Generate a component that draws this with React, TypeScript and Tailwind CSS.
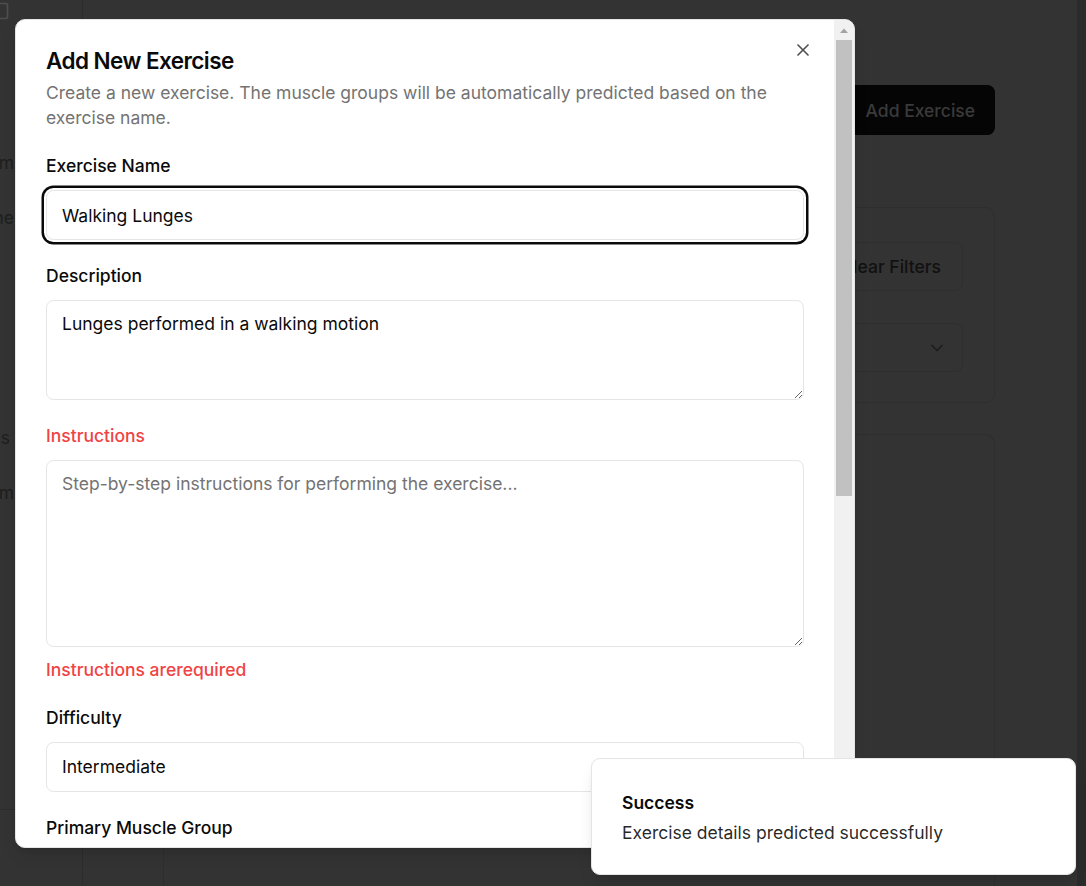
import { X, ChevronDown, Plus, PanelLeft } from "lucide-react";
import type { ReactNode } from "react";

const FieldLabel = ({ children, error }: { children: ReactNode; error?: boolean }) => (
  <label
    className={
      error
        ? "block text-[17.5px] leading-[25px] font-medium text-[#ef4444]"
        : "block text-[17.5px] leading-[25px] font-medium text-[#0a0a0a]"
    }
  >
    {children}
  </label>
);

// sidebar labels are mostly hidden under the dialog, only their tails show
const SideItem = ({ label, narrow }: { label: string; narrow?: boolean }) => (
  <div
    className={
      narrow
        ? "flex h-[25px] w-[10px] justify-end overflow-hidden whitespace-nowrap text-[17.5px] leading-[25px] text-[#1e1e1e]"
        : "flex h-[25px] w-[14px] justify-end overflow-hidden whitespace-nowrap text-[17.5px] leading-[25px] text-[#1e1e1e]"
    }
  >
    {label}
  </div>
);

const BackgroundPage = () => (
  <div className="flex h-full">
    <aside className="flex w-[83px] shrink-0 flex-col border-r border-[#2c2c2c]">
      <div className="relative h-[20px] overflow-hidden">
        <PanelLeft className="absolute -left-[10px] top-[1px] size-[20px] text-[#4e4e4e]" strokeWidth={2} />
      </div>
      <div className="mt-[129.5px] flex flex-col gap-[30px]">
        <SideItem label="Program" />
        <SideItem label="Routine" />
      </div>
      <div className="mt-[195px] flex flex-col gap-[30px]">
        <SideItem label="Exercises" narrow />
        <SideItem label="Platform" />
      </div>
      <div className="mt-auto h-[77px] border-t border-[#2c2c2c]" />
    </aside>

    <main className="flex flex-1 flex-col pt-[85px] pr-[82px] pl-[80px]">
      <div className="flex justify-end">
        <button className="flex h-[50px] items-center gap-[10px] rounded-[7.5px] bg-[#050505] px-[20px] pt-[2px] text-[17.5px] font-medium text-[#3a3a3a]">
          <Plus className="size-[20px]" />
          Add Exercise
        </button>
      </div>

      <div className="mt-[72px] flex h-[196px] flex-col rounded-[10px] border border-[#2e2e2e] px-[31px] pt-[34px]">
        <div className="flex justify-end gap-[20px]">
          <div className="h-[49px] flex-1 rounded-[7.5px] border border-[#2e2e2e]" />
          <button className="h-[49px] rounded-[7.5px] border border-[#2e2e2e] px-[21px] pt-[2px] text-[17.5px] font-medium text-[#111111]">
            Clear Filters
          </button>
        </div>
        <div className="mt-[32px] flex h-[49px] items-center justify-end rounded-[7.5px] border border-[#2e2e2e] pr-[15px]">
          <ChevronDown className="size-[20px] text-[#1d1d1d]" />
        </div>
      </div>

      <div className="mt-[31px] flex-1 rounded-t-[10px] border border-b-0 border-[#2e2e2e]" />
    </main>

    <div className="w-[9px] shrink-0 bg-[#2b2b2b]" />
  </div>
);

const Toast = () => (
  <div className="absolute left-[591px] top-[758px] flex h-[117px] w-[485px] flex-col gap-[5px] rounded-[9px] border border-[#e5e5e5] bg-white px-[30px] pt-[31px] shadow-lg">
    <div className="text-[17.5px] leading-[25px] font-semibold text-[#0a0a0a]">Success</div>
    <div className="text-[17.5px] leading-[25px] text-[#0a0a0a]/90">Exercise details predicted successfully</div>
  </div>
);

const ExerciseDialog = () => (
  <div className="absolute left-[15px] top-[19px] flex h-[829px] w-[840px] overflow-hidden rounded-[10px] border border-[#e5e5e5] bg-white shadow-lg">
    <div className="relative flex-1 overflow-hidden px-[30px] pt-[30px]">
      <button className="absolute left-[776.5px] top-[19.5px] text-[#0a0a0a] opacity-70">
        <X className="size-[20px]" />
      </button>

      <div className="flex flex-col gap-[7.5px]">
        <h2 className="text-[22.5px] leading-[22.5px] font-semibold tracking-tight text-[#0a0a0a]">Add New Exercise</h2>
        <p className="text-[17.5px] leading-[25px] text-[#737373]">
          Create a new exercise. The muscle groups will be automatically predicted based on the exercise name.
        </p>
      </div>

      <form className="mt-[22.5px] flex flex-col gap-[22.5px]">
        <div className="flex flex-col gap-[12.5px]">
          <FieldLabel>Exercise Name</FieldLabel>
          <input
            defaultValue="Walking Lunges"
            className="h-[50px] w-full rounded-[7.5px] border border-[#e5e5e5] bg-white px-[15px] text-[17.5px] text-[#0a0a0a] outline-none ring-[2.5px] ring-[#0a0a0a] ring-offset-[2px] ring-offset-white"
          />
        </div>

        <div className="flex flex-col gap-[12.5px]">
          <FieldLabel>Description</FieldLabel>
          <textarea
            defaultValue="Lunges performed in a walking motion"
            className="block h-[100px] w-full resize-y rounded-[7.5px] border border-[#e5e5e5] bg-white px-[15px] py-[10px] text-[17.5px] leading-[25px] text-[#0a0a0a] outline-none"
          />
        </div>

        <div className="flex flex-col">
          <FieldLabel error>Instructions</FieldLabel>
          <textarea
            placeholder="Step-by-step instructions for performing the exercise..."
            className="mt-[12.5px] block h-[187px] w-full resize-y rounded-[7.5px] border border-[#e5e5e5] bg-white px-[15px] py-[10px] text-[17.5px] leading-[25px] text-[#0a0a0a] outline-none placeholder:text-[#737373]"
          />
          <p className="mt-[10px] text-[17.5px] leading-[25px] font-medium text-[#ef4444]">Instructions arerequired</p>
        </div>

        <div className="flex flex-col gap-[12.5px]">
          <FieldLabel>Difficulty</FieldLabel>
          <button
            type="button"
            className="flex h-[50px] w-full items-center justify-between rounded-[7.5px] border border-[#e5e5e5] bg-white px-[15px] pt-[1px] text-left text-[17.5px] text-[#0a0a0a]"
          >
            Intermediate
            <ChevronDown className="size-[20px] opacity-50" />
          </button>
        </div>

        <div className="flex flex-col gap-[12.5px]">
          <FieldLabel>Primary Muscle Group</FieldLabel>
          <div className="h-[50px] w-full rounded-[7.5px] border border-[#e5e5e5]" />
        </div>
      </form>
    </div>

    <div className="flex w-[20px] shrink-0 flex-col items-center bg-[#f1f1f1]">
      <svg width="20" height="20" viewBox="0 0 20 20" className="shrink-0">
        <path d="M6 13 L10 8.5 L14 13 Z" fill="#a3a3a3" />
      </svg>
      <div className="h-[456px] w-[16px] bg-[#c1c1c1]" />
    </div>
  </div>
);

export default function App() {
  return (
    <div className="relative h-[886px] w-[1086px] overflow-hidden bg-[#333333] font-['Inter',sans-serif]">
      <BackgroundPage />
      <ExerciseDialog />
      <Toast />
    </div>
  );
}
